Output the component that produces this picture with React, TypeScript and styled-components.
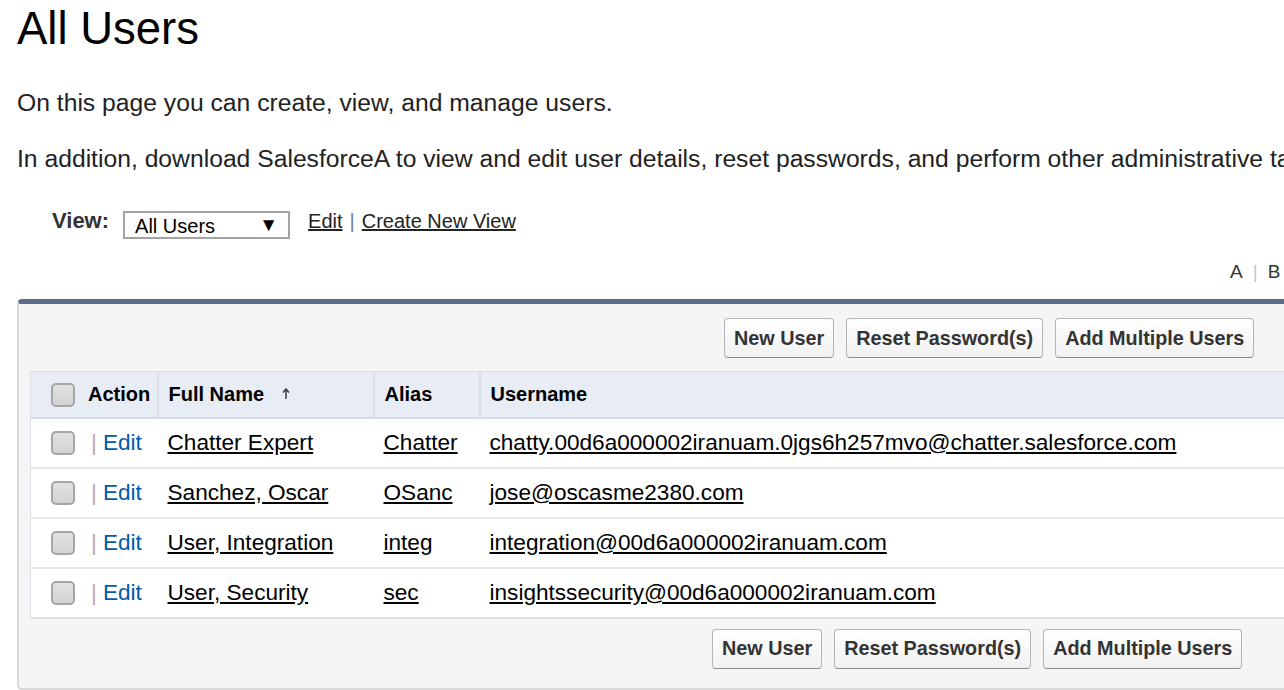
import React from "react";
import styled, { createGlobalStyle } from "styled-components";

const GlobalStyle = createGlobalStyle`
  html, body {
    margin: 0;
    padding: 0;
    background: #ffffff;
    overflow: hidden;
  }
  body {
    font-family: "Liberation Sans", Arial, sans-serif;
    color: #000;
  }
`;

const Page = styled.div`
  width: 1560px;
  padding-left: 17px;
  box-sizing: border-box;
`;

const Title = styled.h1`
  margin: 0;
  padding-top: 3px;
  font-size: 45.5px;
  line-height: 52px;
  font-weight: normal;
  color: #000;
  white-space: nowrap;
`;

const Intro = styled.p<{ $gap: number }>`
  margin: ${(p) => p.$gap}px 0 0 0;
  font-size: 24.7px;
  line-height: 28px;
  color: #222;
  white-space: nowrap;
`;

const ViewRow = styled.div`
  display: flex;
  align-items: center;
  margin-top: 38px;
  padding-left: 35px;
  height: 28px;
`;

const ViewLabel = styled.span`
  font-size: 22px;
  font-weight: bold;
  color: #333;
  margin-bottom: 8px;
`;

const SelectBox = styled.div`
  margin-left: 14px;
  width: 167px;
  height: 28px;
  box-sizing: border-box;
  border: 2px solid #a3a3a3;
  background: #fff;
  display: flex;
  align-items: center;
  justify-content: space-between;
  padding: 3px 10px 0 10px;
  font-size: 20px;
  color: #000;
`;

const Arrow = styled.span`
  font-size: 19px;
  color: #000;
  margin-top: -4px;
`;

const Links = styled.div`
  margin-left: 18px;
  margin-bottom: 8px;
  font-size: 20px;
  color: #333;
  display: flex;
  gap: 7px;
`;

const PlainLink = styled.a`
  color: #222;
  text-decoration: underline;
  cursor: pointer;
`;

const Sep = styled.span`
  color: #6b7fa8;
`;

const AlphaRow = styled.div`
  margin-top: 22px;
  padding-left: 1213px;
  display: flex;
  gap: 10px;
  font-size: 19px;
  line-height: 22px;
  color: #333;
`;

const AlphaSep = styled.span`
  color: #c4c4c4;
`;

const Panel = styled.div`
  margin-top: 16px;
  background: #f5f5f5;
  border-top: 5px solid #5a6b8c;
  border-left: 2px solid #d9d9d9;
  border-bottom: 2px solid #d9d9d9;
  border-radius: 5px 0 0 5px;
`;

const ButtonBar = styled.div<{ $left: number; $top: number; $bottom: number }>`
  display: flex;
  gap: 12px;
  padding: ${(p) => p.$top}px 0 ${(p) => p.$bottom}px ${(p) => p.$left}px;
`;

const Button = styled.button`
  height: 40px;
  padding: 0 9px;
  font-family: "Liberation Sans", Arial, sans-serif;
  font-size: 19.8px;
  font-weight: bold;
  color: #333;
  background: linear-gradient(#ffffff, #f1f1f1);
  border: 1px solid #b5b5b5;
  border-bottom-color: #8a8a8a;
  border-radius: 4px;
  white-space: nowrap;
  cursor: pointer;
`;

const Table = styled.table`
  margin-left: 11px;
  width: calc(100% - 11px);
  border-collapse: collapse;
  background: #fff;
  border-left: 1px solid #dde1e8;
  border-top: 1px solid #d6dbe4;
  border-bottom: 2px solid #dde1e8;
`;

const HeadRow = styled.tr`
  height: 46px;
  background: #e8ecf4;
  border-bottom: 2px solid #d6dbe4;
`;

const HeadCell = styled.th<{ $w?: number; $pl: number; $sep?: boolean }>`
  ${(p) => (p.$w ? `width: ${p.$w}px;` : "")}
  padding: 1px 0 0 ${(p) => p.$pl}px;
  box-sizing: border-box;
  text-align: left;
  font-size: 20px;
  font-weight: bold;
  color: #000;
  white-space: nowrap;
  border-left: ${(p) => (p.$sep ? "2px solid #d9dee7" : "none")};
`;

const BodyRow = styled.tr<{ $first?: boolean }>`
  height: 50px;
  border-top: ${(p) => (p.$first ? "none" : "2px solid #e6e6e6")};
`;

const Cell = styled.td<{ $pl: number }>`
  padding: 0 0 0 ${(p) => p.$pl}px;
  font-size: 22.6px;
  white-space: nowrap;
  color: #000;
`;

const ActionWrap = styled.div`
  display: flex;
  align-items: center;
`;

const Check = styled.span`
  display: inline-block;
  width: 24px;
  height: 24px;
  box-sizing: border-box;
  border: 2px solid #a6a6a6;
  border-radius: 5px;
  background: linear-gradient(#e2e2e2, #d3d3d3);
  flex: none;
`;

const HeadLabel = styled.span`
  margin-left: 13px;
`;

const Pipe = styled.span`
  margin-left: 16px;
  color: #c0a6ab;
`;

const EditLink = styled.a`
  margin-left: 6px;
  color: #015ba7;
  text-decoration: none;
  cursor: pointer;
`;

const DataLink = styled.a`
  color: #000;
  text-decoration: underline;
  cursor: pointer;
`;

const SortArrow = styled.svg`
  margin-left: 18px;
  vertical-align: 1px;
`;

const users = [
  { name: "Chatter Expert", alias: "Chatter", user: "chatty.00d6a000002iranuam.0jgs6h257mvo@chatter.salesforce.com" },
  { name: "Sanchez, Oscar", alias: "OSanc", user: "jose@oscasme2380.com" },
  { name: "User, Integration", alias: "integ", user: "integration@00d6a000002iranuam.com" },
  { name: "User, Security", alias: "sec", user: "insightssecurity@00d6a000002iranuam.com" },
];

const Buttons = () => (
  <>
    <Button>New User</Button>
    <Button>Reset Password(s)</Button>
    <Button>Add Multiple Users</Button>
  </>
);

export default function App() {
  return (
    <Page>
      <GlobalStyle />
      <Title>All Users</Title>
      <Intro $gap={34}>On this page you can create, view, and manage users.</Intro>
      <Intro $gap={28}>
        In addition, download SalesforceA to view and edit user details, reset passwords, and perform other administrative tasks from your mobile device.
      </Intro>
      <ViewRow>
        <ViewLabel>View:</ViewLabel>
        <SelectBox>
          <span>All Users</span>
          <Arrow>▼</Arrow>
        </SelectBox>
        <Links>
          <PlainLink>Edit</PlainLink>
          <Sep>|</Sep>
          <PlainLink>Create New View</PlainLink>
        </Links>
      </ViewRow>
      <AlphaRow>
        <span>A</span>
        <AlphaSep>|</AlphaSep>
        <span>B</span>
        <AlphaSep>|</AlphaSep>
        <span>C</span>
      </AlphaRow>
      <Panel>
        <ButtonBar $left={705} $top={14} $bottom={13}>
          <Buttons />
        </ButtonBar>
        <Table>
          <thead>
            <HeadRow>
              <HeadCell $w={127} $pl={20}>
                <ActionWrap>
                  <Check />
                  <HeadLabel>Action</HeadLabel>
                </ActionWrap>
              </HeadCell>
              <HeadCell $w={216} $pl={10} $sep>
                Full Name
                <SortArrow width="8" height="12" viewBox="0 0 8 12">
                  <path d="M4 11V2" stroke="#333" strokeWidth="1.4" fill="none" />
                  <path d="M1 4.5L4 1L7 4.5" stroke="#333" strokeWidth="1.4" fill="none" />
                </SortArrow>
              </HeadCell>
              <HeadCell $w={106} $pl={10} $sep>
                Alias
              </HeadCell>
              <HeadCell $pl={10} $sep>
                Username
              </HeadCell>
            </HeadRow>
          </thead>
          <tbody>
            {users.map((u, i) => (
              <BodyRow key={u.name} $first={i === 0}>
                <Cell $pl={20}>
                  <ActionWrap>
                    <Check />
                    <Pipe>|</Pipe>
                    <EditLink>Edit</EditLink>
                  </ActionWrap>
                </Cell>
                <Cell $pl={10}>
                  <DataLink>{u.name}</DataLink>
                </Cell>
                <Cell $pl={10}>
                  <DataLink>{u.alias}</DataLink>
                </Cell>
                <Cell $pl={10}>
                  <DataLink>{u.user}</DataLink>
                </Cell>
              </BodyRow>
            ))}
          </tbody>
        </Table>
        <ButtonBar $left={693} $top={10} $bottom={19}>
          <Buttons />
        </ButtonBar>
      </Panel>
    </Page>
  );
}
